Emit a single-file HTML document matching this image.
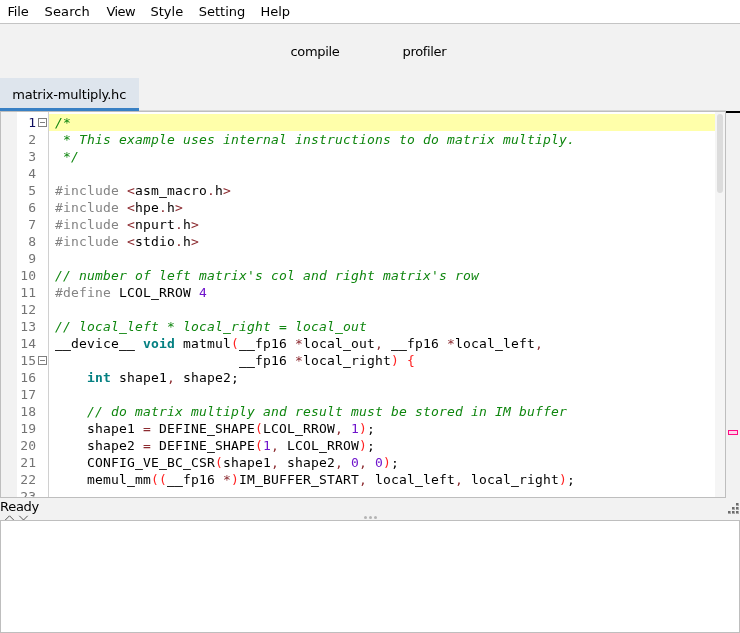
<!DOCTYPE html>
<html>
<head>
<meta charset="utf-8">
<title>matrix-multiply.hc</title>
<style>
html,body{margin:0;padding:0;}
body{width:740px;height:633px;overflow:hidden;background:#f2f2f2;position:relative;
  font-family:"DejaVu Sans","Liberation Sans",sans-serif;font-size:13px;color:#000;}
#root{position:absolute;left:0;top:0;width:740px;height:633px;overflow:hidden;will-change:transform;}
.abs{position:absolute;}
#menubar{left:0;top:0;width:740px;height:23px;background:#fff;border-bottom:1px solid #c4c4c4;}
#menubar span{position:absolute;top:3px;line-height:17px;white-space:nowrap;}
.tb{position:absolute;top:43px;line-height:17px;white-space:nowrap;}
#tab{left:0;top:78px;width:139px;height:30px;background:#dee5ed;}
#tab span{position:absolute;left:12.2px;top:8px;line-height:17px;white-space:nowrap;letter-spacing:-0.2px;}
#tabline{left:0;top:108px;width:139px;height:3px;background:#3880c4;}
#edtop1{left:139px;top:110px;width:587px;height:1px;background:#d6d6d6;}
#edtop2{left:0;top:111px;width:726px;height:1px;background:#bebebe;}
#editor{left:0;top:112px;width:726px;height:386px;background:#fff;overflow:hidden;}
#edleft{left:0;top:0;width:1px;height:386px;background:#bebebe;}
#edright{left:725px;top:0;width:1px;height:386px;background:#bebebe;}
#edbottom{left:0;top:385px;width:726px;height:1px;background:#bebebe;}
#m0{left:1px;top:0;width:16px;height:385px;background:#f2f2f2;}
#msep{left:48px;top:0;width:1px;height:385px;background:#d0d0d0;}
#caret{left:49px;top:2px;width:666px;height:17px;background:#ffffaa;}
#sbtrack{left:715px;top:0;width:10px;height:385px;background:#f5f5f5;}
#sbthumb{left:717px;top:2px;width:6px;height:79px;background:#dcdcdc;border-radius:3px;}
.ln{position:absolute;left:12px;width:24.2px;text-align:right;height:17px;line-height:17px;color:#747474;white-space:nowrap;font-family:"DejaVu Sans Mono","Liberation Mono",monospace;font-size:13px;letter-spacing:0.173px;}
.ln.cur{color:#101060;}
.cl{position:absolute;left:55px;height:17px;line-height:17px;white-space:pre;
  font-family:"DejaVu Sans Mono","Liberation Mono",monospace;font-size:13px;letter-spacing:0.173px;color:#000;}
u{text-decoration:none;text-shadow:0 0 0 currentColor,0 0 0 currentColor;}
.c{color:#0f860f;font-style:italic;}
.p{color:#848484;}
.o{color:#8c2b30;}
.b{color:#ff2020;}
.n{color:#6f14cc;}
.k{color:#058082;font-weight:bold;}
.fold{position:absolute;left:38px;width:7px;height:7px;border:1px solid #808080;background:#fff;}
.fold i{position:absolute;left:1px;top:3px;width:5px;height:1px;background:#808080;}
#rpanel{left:726px;top:111px;width:14px;height:2px;background:#000;}
#mark{left:728px;top:430px;width:8px;height:3px;border:1px solid #ff0a84;background:#ffd2ea;}
#ready{left:0;top:498px;line-height:17px;white-space:nowrap;letter-spacing:-0.27px;}
#out{left:0;top:520px;width:738px;height:111px;background:#fff;border:1px solid #bebebe;}
.dot{position:absolute;width:3px;height:3px;border-radius:1.5px;background:#b4b4b4;top:516px;}
.g{position:absolute;width:2px;height:2px;background:#6c6c6c;border-right:1px solid #a8a8a8;border-bottom:1px solid #a8a8a8;}
</style>
</head>
<body>
<div id="root">
<div id="menubar" class="abs">
<span style="left:7.5px;letter-spacing:-0.17px">File</span><span style="left:44.6px;letter-spacing:0.12px">Search</span><span style="left:106.4px;letter-spacing:-0.53px">View</span><span style="left:150.5px">Style</span><span style="left:198.7px">Setting</span><span style="left:260.6px;letter-spacing:-0.1px">Help</span>
</div>
<span class="tb" style="left:290.5px;letter-spacing:-0.33px">compile</span>
<span class="tb" style="left:402.6px;letter-spacing:-0.36px">profiler</span>
<div id="tab" class="abs"><span>matrix-multiply.hc</span></div>
<div id="tabline" class="abs"></div>
<div id="edtop1" class="abs"></div>
<div id="edtop2" class="abs"></div>
<div id="editor" class="abs">
<div id="m0" class="abs"></div>
<div id="msep" class="abs"></div>
<div id="caret" class="abs"></div>
<div id="sbtrack" class="abs"></div>
<div id="sbthumb" class="abs"></div>
<div id="lines">
<div class="ln cur" style="top:2px">1</div>
<div class="fold" style="top:6px"><i></i></div>
<div class="cl" style="top:2px"><span class="c">/*</span></div>
<div class="ln" style="top:19px">2</div>
<div class="cl" style="top:19px"><span class="c"> * This example uses internal instructions to do matrix multiply.</span></div>
<div class="ln" style="top:36px">3</div>
<div class="cl" style="top:36px"><span class="c"> */</span></div>
<div class="ln" style="top:53px">4</div>
<div class="ln" style="top:70px">5</div>
<div class="cl" style="top:70px"><span class="p">#include </span><span class="o">&lt;</span>asm<u>_</u>macro<span class="o">.</span>h<span class="o">&gt;</span></div>
<div class="ln" style="top:87px">6</div>
<div class="cl" style="top:87px"><span class="p">#include </span><span class="o">&lt;</span>hpe<span class="o">.</span>h<span class="o">&gt;</span></div>
<div class="ln" style="top:104px">7</div>
<div class="cl" style="top:104px"><span class="p">#include </span><span class="o">&lt;</span>npurt<span class="o">.</span>h<span class="o">&gt;</span></div>
<div class="ln" style="top:121px">8</div>
<div class="cl" style="top:121px"><span class="p">#include </span><span class="o">&lt;</span>stdio<span class="o">.</span>h<span class="o">&gt;</span></div>
<div class="ln" style="top:138px">9</div>
<div class="ln" style="top:155px">10</div>
<div class="cl" style="top:155px"><span class="c">// number of left matrix&#x27;s col and right matrix&#x27;s row</span></div>
<div class="ln" style="top:172px">11</div>
<div class="cl" style="top:172px"><span class="p">#define </span>LCOL<u>_</u>RROW <span class="n">4</span></div>
<div class="ln" style="top:189px">12</div>
<div class="ln" style="top:206px">13</div>
<div class="cl" style="top:206px"><span class="c">// local<u>_</u>left * local<u>_</u>right = local<u>_</u>out</span></div>
<div class="ln" style="top:223px">14</div>
<div class="cl" style="top:223px"><u>__</u>device<u>__</u> <span class="k">void</span> matmul<span class="b">(</span><u>__</u>fp16 <span class="o">*</span>local<u>_</u>out<span class="o">,</span> <u>__</u>fp16 <span class="o">*</span>local<u>_</u>left<span class="o">,</span></div>
<div class="ln" style="top:240px">15</div>
<div class="fold" style="top:244px"><i></i></div>
<div class="cl" style="top:240px">                       <u>__</u>fp16 <span class="o">*</span>local<u>_</u>right<span class="b">)</span> <span class="b">{</span></div>
<div class="ln" style="top:257px">16</div>
<div class="cl" style="top:257px">    <span class="k">int</span> shape1<span class="o">,</span> shape2;</div>
<div class="ln" style="top:274px">17</div>
<div class="ln" style="top:291px">18</div>
<div class="cl" style="top:291px">    <span class="c">// do matrix multiply and result must be stored in IM buffer</span></div>
<div class="ln" style="top:308px">19</div>
<div class="cl" style="top:308px">    shape1 <span class="o">=</span> DEFINE<u>_</u>SHAPE<span class="b">(</span>LCOL<u>_</u>RROW<span class="o">,</span> <span class="n">1</span><span class="b">)</span>;</div>
<div class="ln" style="top:325px">20</div>
<div class="cl" style="top:325px">    shape2 <span class="o">=</span> DEFINE<u>_</u>SHAPE<span class="b">(</span><span class="n">1</span><span class="o">,</span> LCOL<u>_</u>RROW<span class="b">)</span>;</div>
<div class="ln" style="top:342px">21</div>
<div class="cl" style="top:342px">    CONFIG<u>_</u>VE<u>_</u>BC<u>_</u>CSR<span class="b">(</span>shape1<span class="o">,</span> shape2<span class="o">,</span> <span class="n">0</span><span class="o">,</span> <span class="n">0</span><span class="b">)</span>;</div>
<div class="ln" style="top:359px">22</div>
<div class="cl" style="top:359px">    memul<u>_</u>mm<span class="b">((</span><u>__</u>fp16 <span class="o">*</span><span class="b">)</span>IM<u>_</u>BUFFER<u>_</u>START<span class="o">,</span> local<u>_</u>left<span class="o">,</span> local<u>_</u>right<span class="b">)</span>;</div>
<div class="ln" style="top:376px">23</div>
</div>
<div id="edleft" class="abs"></div>
<div id="edright" class="abs"></div>
<div id="edbottom" class="abs"></div>
</div>
<div id="rpanel" class="abs"></div>
<div id="mark" class="abs"></div>
<div id="ready" class="abs">Ready</div>
<svg class="abs" style="left:0;top:512px" width="40" height="8" viewBox="0 0 40 8"><path d="M5 8.3 L9.5 3.8 L14 8.3 M19.3 3.8 L23.5 8 L27.7 3.8" fill="none" stroke="#555" stroke-width="1"/></svg>
<div class="dot" style="left:364px"></div><div class="dot" style="left:369px"></div><div class="dot" style="left:374px"></div>
<div class="g" style="left:736px;top:503px"></div>
<div class="g" style="left:732px;top:507px"></div><div class="g" style="left:736px;top:507px"></div>
<div class="g" style="left:728px;top:511px"></div><div class="g" style="left:732px;top:511px"></div><div class="g" style="left:736px;top:511px"></div>
<div id="out" class="abs"></div>
</div>
</body>
</html>
